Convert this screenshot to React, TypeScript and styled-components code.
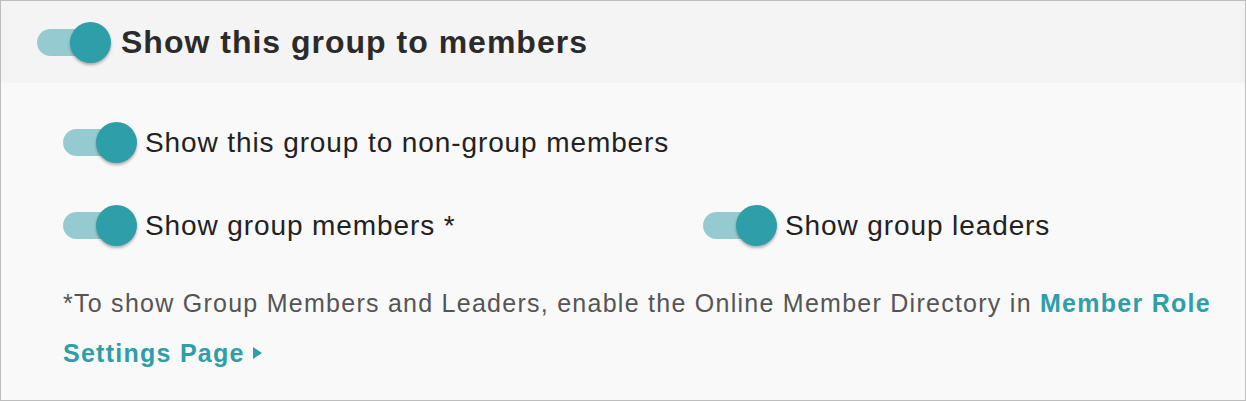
import React, { useState } from "react";
import styled, { createGlobalStyle } from "styled-components";

const Global = createGlobalStyle`
  html, body { margin: 0; padding: 0; background: #ffffff; }
  body { font-family: "Liberation Sans", Arial, sans-serif; }
`;

const Panel = styled.section`
  width: 1246px;
  height: 401px;
  box-sizing: border-box;
  border: 1px solid #bdbdbd;
  background: #f9f9f9;
  display: flex;
  flex-direction: column;
`;

const Header = styled.header`
  height: 82px;
  background: #f4f4f4;
  display: flex;
  align-items: center;
  padding-left: 36px;
  gap: 9px;
`;

const Title = styled.h2`
  margin: 0;
  font-size: 32px;
  letter-spacing: 1px;
  font-weight: 700;
  color: #2b2b2b;
`;

const Body = styled.div`
  padding: 39px 0 0 62px;
  display: flex;
  flex-direction: column;
`;

const Row = styled.div`
  display: grid;
  grid-template-columns: 640px 1fr;
  height: 83px;
  align-items: start;
`;

const Item = styled.label`
  display: flex;
  align-items: center;
  gap: 7px;
  cursor: pointer;
`;

const Label = styled.span`
  font-size: 28px;
  letter-spacing: 0.9px;
  color: #222;
`;

const Track = styled.button<{ $on: boolean }>`
  position: relative;
  width: 75px;
  height: 41px;
  padding: 0;
  border: 0;
  background: transparent;
  cursor: pointer;
  flex: none;
  &::before {
    content: "";
    position: absolute;
    left: 0;
    top: 7px;
    width: 62px;
    height: 27px;
    border-radius: 14px;
    background: ${(p) => (p.$on ? "#95cbd0" : "#cfcfcf")};
  }
`;

const Knob = styled.span<{ $on: boolean }>`
  position: absolute;
  top: 0;
  left: ${(p) => (p.$on ? "33px" : "0")};
  width: 41px;
  height: 41px;
  border-radius: 50%;
  background: ${(p) => (p.$on ? "#2e9ea8" : "#f1f1f1")};
  box-shadow: 0 2px 3px rgba(0, 0, 0, 0.3);
`;

const Note = styled.p`
  margin: -10px 0 0;
  padding-right: 20px;
  font-size: 25px;
  letter-spacing: 1.26px;
  line-height: 50px;
  color: #555;
`;

const Link = styled.a`
  color: #2e9ea8;
  font-weight: 700;
  text-decoration: none;
  white-space: nowrap;
`;

const Caret = styled.span`
  display: inline-block;
  width: 0;
  height: 0;
  margin-left: 8px;
  border-top: 6px solid transparent;
  border-bottom: 6px solid transparent;
  border-left: 9px solid #2e9ea8;
  vertical-align: 3px;
`;

function Toggle({ on, onToggle }: { on: boolean; onToggle: () => void }) {
  return (
    <Track type="button" $on={on} onClick={onToggle} aria-pressed={on}>
      <Knob $on={on} />
    </Track>
  );
}

export default function App() {
  const [s, setS] = useState({ group: true, non: true, members: true, leaders: true });
  const t = (k: keyof typeof s) => () => setS((p) => ({ ...p, [k]: !p[k] }));
  return (
    <>
      <Global />
      <Panel>
        <Header>
          <Toggle on={s.group} onToggle={t("group")} />
          <Title>Show this group to members</Title>
        </Header>
        <Body>
          <Row>
            <Item>
              <Toggle on={s.non} onToggle={t("non")} />
              <Label>Show this group to non-group members</Label>
            </Item>
          </Row>
          <Row>
            <Item>
              <Toggle on={s.members} onToggle={t("members")} />
              <Label>Show group members *</Label>
            </Item>
            <Item>
              <Toggle on={s.leaders} onToggle={t("leaders")} />
              <Label>Show group leaders</Label>
            </Item>
          </Row>
          <Note>
            *To show Group Members and Leaders, enable the Online Member Directory in{" "}
            <Link href="#">Member Role</Link>{" "}
            <Link href="#">
              Settings Page
              <Caret />
            </Link>
          </Note>
        </Body>
      </Panel>
    </>
  );
}
